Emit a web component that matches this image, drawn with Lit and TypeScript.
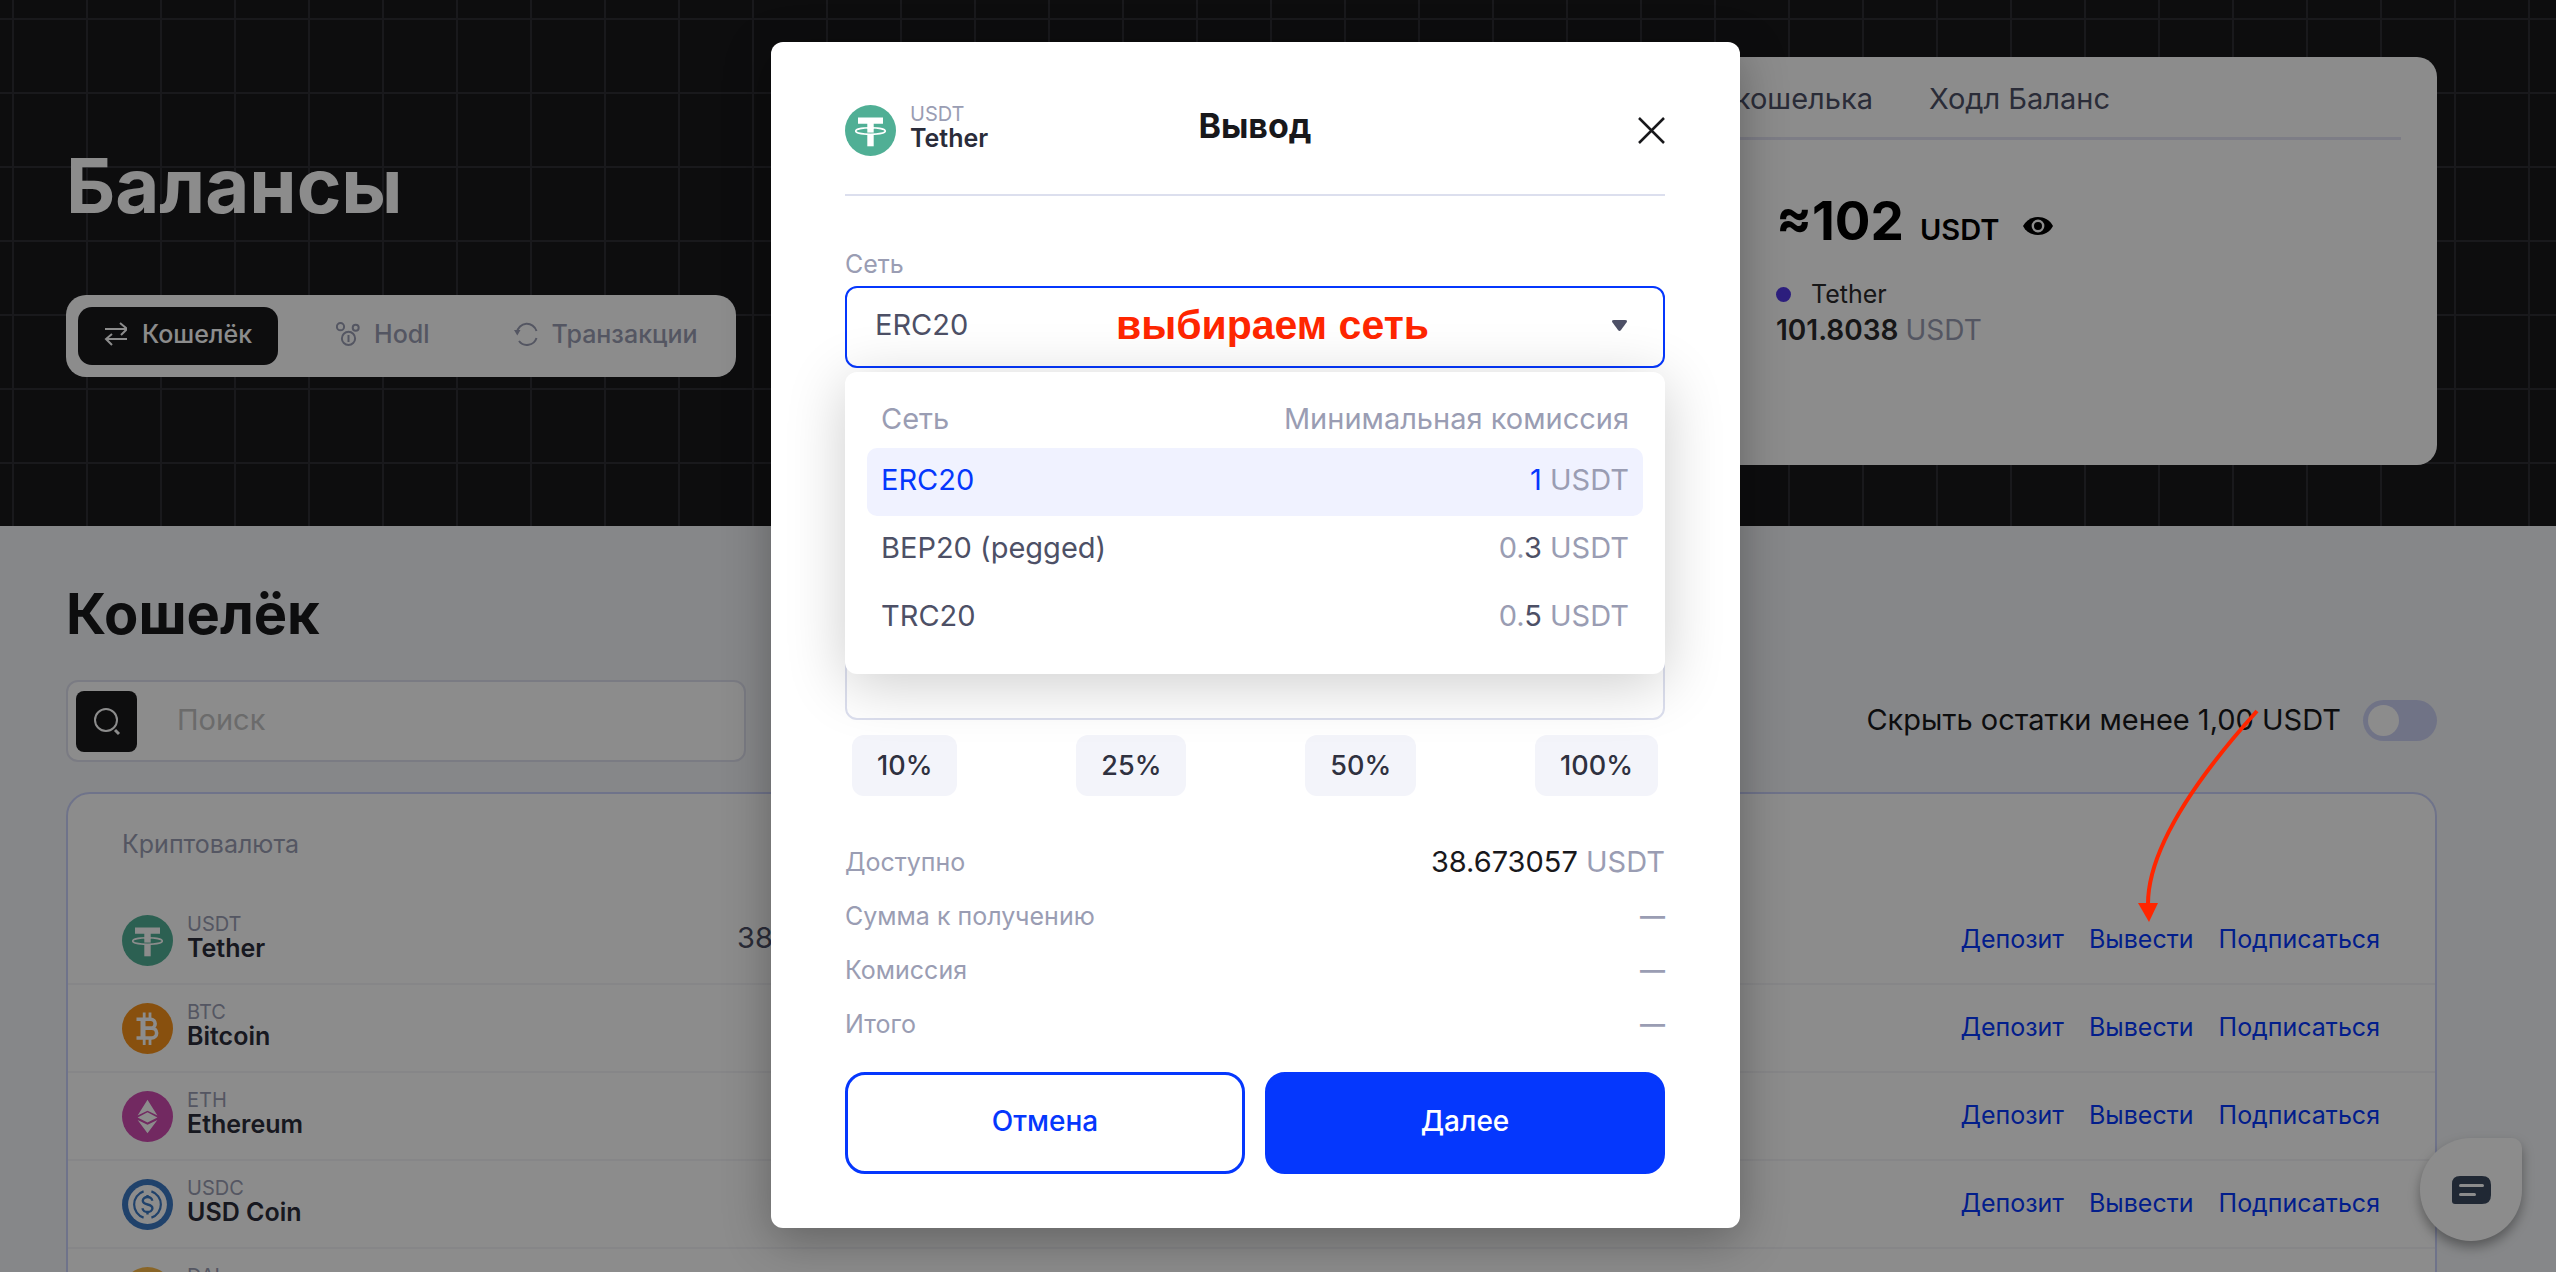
import { LitElement, html, css, svg } from "lit";
import { customElement, property, state } from "lit/decorators.js";
import { classMap } from "lit/directives/class-map.js";

type CoinId = "USDT" | "BTC" | "ETH" | "USDC" | "DAI";

interface Coin {
  id: CoinId;
  name: string;
  balance?: string;
}

interface Network {
  name: string;
  faint: string;
  strong: string;
}

const COINS: Coin[] = [
  { id: "USDT", name: "Tether", balance: "38.673057" },
  { id: "BTC", name: "Bitcoin" },
  { id: "ETH", name: "Ethereum" },
  { id: "USDC", name: "USD Coin" },
  { id: "DAI", name: "Dai" },
];

const NETWORKS: Network[] = [
  { name: "ERC20", faint: "", strong: "1" },
  { name: "BEP20 (pegged)", faint: "0.", strong: "3" },
  { name: "TRC20", faint: "0.", strong: "5" },
];

const SHARES = ["10%", "25%", "50%", "100%"];

const COIN_ART: Record<CoinId, unknown> = {
  USDT: svg`
    <circle cx="25.5" cy="25.5" r="25.5" fill="#50af95" />
    <path fill="#fff" d="M13 12.5h25v6.2h-9.3v5h-6.4v-5H13z" />
    <path fill="#fff" d="M22.3 29h6.4v12.3h-6.4z" />
    <ellipse cx="25.5" cy="26" rx="14.8" ry="3.3" fill="none" stroke="#fff" stroke-width="1.6" />
    <path fill="#fff" d="M22.3 23h6.4v4.600h-6.400z" />`,
  BTC: svg`
    <circle cx="25.5" cy="25.5" r="25.5" fill="#f7931a" />
    <g fill="none" stroke="#fff">
      <path stroke-width="2.8" d="M22.2 9.5v6M28 9.5v6M22.2 36v6M28 36v6" />
      <path stroke-width="3.6" d="M14.5 16.2h14.2a4.4 4.4 0 0 1 0 8.9h-7.5M14.5 35h15.2a4.9 4.9 0 0 0 0-9.9h-8.5" />
      <path stroke-width="5" d="M21 16v19" />
    </g>`,
  ETH: svg`
    <circle cx="25.5" cy="25.5" r="25.5" fill="#cf4bb1" />
    <path fill="#fff" d="M25.5 8.8 35.4 24.4l-9.9-4.6-9.9 4.6z" />
    <path fill="#fff" d="m25.5 21.2 9.9 5.2-9.9 5.2-9.9-5.2z" />
    <path fill="#fff" d="m15.6 28.9 9.9 4.9 9.9-4.9-9.9 13.4z" />`,
  USDC: svg`
    <circle cx="25.5" cy="25.5" r="25.5" fill="#3b78c4" />
    <circle cx="25.5" cy="25.5" r="19.4" fill="#fff" />
    <g fill="none" stroke="#3b78c4" stroke-width="2.2">
      <path d="M21.6 12.4a13.8 13.8 0 0 0 0 26.2M29.4 12.4a13.8 13.8 0 0 1 0 26.2" />
      <path stroke-width="2.4" d="M30.2 21.8c0-5-9.4-5-9.4 0s9.6 2.4 9.6 7.4-9.8 5-9.8 0M25.5 16v3M25.5 32.4v3" />
    </g>`,
  DAI: svg`
    <circle cx="25.5" cy="25.5" r="25.5" fill="#f9b948" />`,
};

@customElement("coin-label")
export class CoinLabel extends LitElement {
  @property() coin: CoinId = "USDT";
  @property() name = "";

  static styles = css`
    :host {
      display: inline-flex;
      align-items: center;
      gap: 14px;
      text-align: left;
    }
    .art {
      display: block;
      width: 51px;
      height: 51px;
      flex: none;
    }
    .text {
      display: flex;
      flex-direction: column;
      padding-bottom: 8px;
      line-height: 24px;
    }
    .ticker {
      font-size: 20px;
      color: #9a9db3;
    }
    .name {
      font-size: 25px;
      font-weight: 600;
      color: #2a2c3a;
    }
  `;

  render() {
    return html`
      <svg class="art" viewBox="0 0 51 51" aria-hidden="true">${COIN_ART[this.coin]}</svg>
      <span class="text">
        <span class="ticker">${this.coin}</span>
        <span class="name">${this.name}</span>
      </span>
    `;
  }
}

@customElement("balance-hero")
export class BalanceHero extends LitElement {
  static styles = css`
    :host {
      display: flex;
      justify-content: space-between;
      align-items: center;
      padding: 57px 119px 61px 66px;
      background-color: #18181b;
      background-image:
        linear-gradient(to right, #2f2f33 2px, transparent 2px),
        linear-gradient(to bottom, #2f2f33 2px, transparent 2px);
      background-size: 74px 74px;
      background-position: 12px 18px;
    }
    .title {
      margin: 0 0 70px;
      font-size: 76px;
      line-height: 80px;
      font-weight: 700;
      color: #fff;
    }
    .tabs {
      display: flex;
      width: fit-content;
      padding: 12px;
      background: #fff;
      border-radius: 20px;
    }
    .tab {
      display: inline-flex;
      align-items: center;
      gap: 14px;
      height: 58px;
      padding: 0 26px 4px;
      border: 0;
      border-radius: 14px;
      background: none;
      font: 500 25px/28px Inter, "Liberation Sans", sans-serif;
      color: #9a9db3;
    }
    .tab + .tab {
      margin-left: 32px;
    }
    .tab.active {
      background: #18181b;
      color: #fff;
    }
    .tab svg {
      width: 24px;
      height: 24px;
      fill: none;
      stroke: currentColor;
      stroke-width: 2;
    }
    .card {
      box-sizing: border-box;
      width: 848px;
      min-height: 408px;
      padding: 24px 36px;
      background: #fff;
      border-radius: 20px;
    }
    .nav {
      display: flex;
      justify-content: flex-start;
      gap: 56px;
      padding-bottom: 21px;
      border-bottom: 3px solid #e4e3f5;
    }
    .nav a {
      font-size: 29px;
      line-height: 35px;
      color: #4d5066;
      text-decoration: none;
    }
    .body {
      padding: 49px 0 0 151px;
    }
    .total {
      display: flex;
      align-items: baseline;
      gap: 16px;
      font-size: 53px;
      line-height: 64px;
      font-weight: 700;
      color: #000;
    }
    .unit {
      font-size: 29px;
      font-weight: 600;
    }
    .eye {
      display: inline-flex;
      align-self: center;
      margin-left: 8px;
      padding: 0;
      border: 0;
      background: none;
    }
    .eye svg {
      width: 30px;
      height: 24px;
    }
    .asset {
      display: flex;
      align-items: center;
      gap: 20px;
      margin-top: 14px;
      font-size: 25px;
      line-height: 36px;
      color: #2a2a2c;
    }
    .dot {
      width: 15px;
      height: 15px;
      border-radius: 50%;
      background: #5239e6;
    }
    .amount {
      font-size: 28px;
      line-height: 36px;
      font-weight: 600;
      color: #2a2a2c;
    }
    .amount span {
      font-weight: 400;
      color: #9a9db3;
    }
  `;

  render() {
    return html`
      <div>
        <h1 class="title">Балансы</h1>
        <nav class="tabs">
          <button class="tab active">
            <svg viewBox="0 0 24 24"><path d="M1 7h21M16 1l6 5v2l-5 5M23 17H2M8 12l-6 5 6 6" /></svg>
            Кошелёк
          </button>
          <button class="tab">
            <svg viewBox="0 0 24 24">
              <circle cx="4.5" cy="4.7" r="3.6" /><circle cx="19.7" cy="5.7" r="3" />
              <circle cx="12.5" cy="16.4" r="6.6" /><path d="M12.5 13v7" />
            </svg>
            Hodl
          </button>
          <button class="tab">
            <svg viewBox="0 0 24 24">
              <path d="M3 10.5A10 10 0 0 1 22.5 9M22.5 16A10 10 0 0 1 5 19" />
              <path fill="currentColor" stroke="none" d="M0 8h6.5L3.3 13.5z" />
            </svg>
            Транзакции
          </button>
        </nav>
      </div>
      <section class="card">
        <nav class="nav">
          <a href="#wallet">Баланс кошелька</a>
          <a href="#hodl">Ходл Баланс</a>
        </nav>
        <div class="body">
          <div class="total">
            ≈102
            <span class="unit">USDT</span>
            <button class="eye" aria-label="Скрыть баланс">
              <svg viewBox="0 0 30 24">
                <path d="M0 12C3 6 9 3 15 3s12 3 15 9c-3 6-9 9-15 9S3 18 0 12z" />
                <circle cx="15" cy="12" r="5.2" fill="none" stroke="#fff" stroke-width="2.4" />
              </svg>
            </button>
          </div>
          <div class="asset"><span class="dot"></span>Tether</div>
          <div class="amount">101.8038 <span>USDT</span></div>
        </div>
      </section>
    `;
  }
}

@customElement("wallet-section")
export class WalletSection extends LitElement {
  static styles = css`
    :host {
      display: block;
      padding: 56px 119px 0 66px;
      background: #f4f6f9;
    }
    .title {
      margin: 0 0 34px;
      font-size: 56px;
      line-height: 64px;
      font-weight: 700;
      color: #18181b;
    }
    .toolbar {
      display: flex;
      justify-content: space-between;
      align-items: center;
      margin-bottom: 30px;
    }
    .search {
      box-sizing: border-box;
      display: flex;
      align-items: center;
      width: 680px;
      height: 82px;
      padding: 0 8px;
      background: #fff;
      border: 2px solid #dfe0ee;
      border-radius: 12px;
    }
    .go {
      display: inline-flex;
      align-items: center;
      justify-content: center;
      width: 61px;
      height: 61px;
      padding: 0;
      border: 0;
      border-radius: 8px;
      background: #18181b;
    }
    .go svg {
      width: 30px;
      height: 30px;
      fill: none;
      stroke: #fff;
      stroke-width: 2;
    }
    .query {
      flex: 1;
      min-width: 0;
      padding: 0 40px 2px;
      border: 0;
      outline: 0;
      background: none;
      font: 400 29px/36px Inter, "Liberation Sans", sans-serif;
    }
    .query::placeholder {
      color: #c3c3c3;
      opacity: 1;
    }
    .filter {
      display: inline-flex;
      align-items: center;
      gap: 22px;
      padding-bottom: 2px;
      font-size: 29px;
      line-height: 36px;
      color: #18181b;
    }
    .switch {
      appearance: none;
      display: flex;
      align-items: center;
      width: 74px;
      height: 41px;
      margin: 0;
      padding: 0 5px;
      border-radius: 21px;
      background: #cdd1f5;
    }
    .switch::before {
      content: "";
      width: 31px;
      height: 31px;
      border-radius: 50%;
      background: #fff;
    }
    .switch:checked {
      justify-content: flex-end;
    }
    .panel {
      background: #fff;
      border: 2px solid #cbd2fb;
      border-radius: 24px;
    }
    .coins {
      width: 100%;
      border-collapse: separate;
      border-spacing: 0;
    }
    .head {
      height: 103px;
      padding: 0 0 4px 54px;
      box-sizing: border-box;
      text-align: left;
      font-size: 25px;
      font-weight: 400;
      color: #9a9db3;
    }
    .cell {
      box-sizing: border-box;
      height: 88px;
      padding: 0;
      border-bottom: 2px solid #f4f4f7;
    }
    .coin {
      width: 669px;
      padding-left: 54px;
      line-height: 0;
    }
    .balance {
      padding-bottom: 4px;
      font-size: 29px;
      color: #4d5066;
      line-height: 36px;
    }
    .actions {
      padding: 0 55px 2px 0;
      text-align: right;
    }
    .links {
      display: inline-flex;
      gap: 25px;
    }
    .links a {
      font-size: 25px;
      line-height: 28px;
      color: #0537fd;
      text-decoration: none;
    }
  `;

  render() {
    return html`
      <h2 class="title">Кошелёк</h2>
      <div class="toolbar">
        <form class="search" @submit=${(e: Event) => e.preventDefault()}>
          <button class="go" aria-label="Поиск">
            <svg viewBox="0 0 30 30"><circle cx="14" cy="14" r="11" /><path d="m23 24 4 4" stroke-width="3" /></svg>
          </button>
          <input class="query" type="text" placeholder="Поиск" aria-label="Поиск" />
        </form>
        <label class="filter">
          Скрыть остатки менее 1,00 USDT
          <input class="switch" type="checkbox" />
        </label>
      </div>
      <div class="panel">
        <table class="coins">
          <thead>
            <tr>
              <th class="head">Криптовалюта</th>
              <th class="head"></th>
              <th class="head"></th>
            </tr>
          </thead>
          <tbody>
            ${COINS.map(
              (c) => html`
                <tr>
                  <td class="cell coin"><coin-label coin=${c.id} name=${c.name}></coin-label></td>
                  <td class="cell balance">${c.balance ?? ""}</td>
                  <td class="cell actions">
                    <span class="links">
                      <a href="#deposit">Депозит</a>
                      <a href="#withdraw">Вывести</a>
                      <a href="#subscribe">Подписаться</a>
                    </span>
                  </td>
                </tr>
              `,
            )}
          </tbody>
        </table>
      </div>
    `;
  }
}

@customElement("withdraw-dialog")
export class WithdrawDialog extends LitElement {
  @state() private network = "ERC20";

  static styles = css`
    :host {
      box-sizing: border-box;
      display: block;
      width: 969px;
      max-width: 100%;
      padding: 0 75px 54px 74px;
      background: #fff;
      border-radius: 12px;
      box-shadow: 0 12px 48px rgba(0, 0, 0, 0.3);
    }
    .header {
      display: grid;
      grid-template-columns: 1fr auto 1fr;
      align-items: center;
      padding: 60px 0 36px;
      border-bottom: 2px solid #dcdfee;
    }
    .title {
      margin: 0;
      padding-bottom: 8px;
      font-size: 34px;
      line-height: 40px;
      font-weight: 700;
      color: #18181b;
    }
    .close {
      justify-self: end;
      display: inline-flex;
      padding: 0;
      border: 0;
      background: none;
    }
    .close svg {
      width: 27px;
      height: 27px;
      fill: none;
      stroke: #18181b;
      stroke-width: 2.5;
    }
    .label {
      display: block;
      margin: 54px 0 8px;
      font-size: 25px;
      line-height: 28px;
      color: #9a9db3;
    }
    .picker {
      position: relative;
    }
    .select,
    .field {
      box-sizing: border-box;
      display: block;
      width: 100%;
      height: 82px;
      padding: 0 28px 4px;
      border: 2px solid #dcdfee;
      border-radius: 12px;
      outline: 0;
      background: #fff;
      font: 400 29px/36px Inter, "Liberation Sans", sans-serif;
      color: #4d5066;
    }
    .select {
      appearance: none;
      border-color: #0537fd;
    }
    .caret {
      position: absolute;
      right: 38px;
      top: 34px;
      width: 15px;
      height: 11px;
      fill: #4d5066;
    }
    .note {
      position: absolute;
      left: 271px;
      top: 15px;
      font: 700 41px/48px "Liberation Sans", Arial, sans-serif;
      color: #ff2600;
      white-space: nowrap;
      pointer-events: none;
    }
    .menu {
      position: absolute;
      z-index: 1;
      left: 0;
      right: 0;
      top: 86px;
      padding: 13px 22px 22px;
      background: #fff;
      border-radius: 12px;
      box-shadow: 0 10px 60px rgba(0, 0, 0, 0.2);
      font-size: 29px;
      line-height: 36px;
    }
    .menu-head {
      display: flex;
      justify-content: space-between;
      padding: 16px 14px 11px;
      color: #9a9db3;
    }
    .options {
      margin: 0;
      padding: 0;
      list-style: none;
    }
    .option {
      display: flex;
      justify-content: space-between;
      padding: 14px 14px 18px;
      border-radius: 10px;
      color: #4d5066;
    }
    .option.chosen {
      background: #f0f2ff;
      color: #0537fd;
    }
    .faint {
      color: #9a9db3;
    }
    .address {
      margin-top: 58px;
    }
    .sum {
      margin-top: 130px;
    }
    .shares {
      display: flex;
      justify-content: space-between;
      padding: 15px 7px 39px;
    }
    .share {
      height: 61px;
      padding: 0 25px;
      border: 0;
      border-radius: 12px;
      background: #f3f4fa;
      font: 500 27px/36px Inter, "Liberation Sans", sans-serif;
      color: #2f3140;
    }
    .summary {
      margin: 0 0 21px;
      font-size: 25px;
      line-height: 54px;
      color: #9a9db3;
    }
    .line {
      display: flex;
      justify-content: space-between;
    }
    .value {
      margin: 0;
      font-weight: 600;
    }
    .available {
      font-size: 29px;
      font-weight: 400;
    }
    .available b {
      font-weight: 400;
      color: #18181b;
    }
    .buttons {
      display: grid;
      grid-template-columns: 1fr 1fr;
      gap: 20px;
    }
    .btn {
      height: 102px;
      padding: 0 0 4px;
      border: 3px solid #0537fd;
      border-radius: 20px;
      background: #fff;
      font: 500 28px/36px Inter, "Liberation Sans", sans-serif;
      color: #0537fd;
    }
    .btn.primary {
      background: #0537fd;
      color: #fff;
    }
  `;

  render() {
    return html`
      <header class="header">
        <coin-label coin="USDT" name="Tether"></coin-label>
        <h2 class="title">Вывод</h2>
        <button class="close" aria-label="Закрыть">
          <svg viewBox="0 0 27 27"><path d="m1 1 25 25M26 1 1 26" /></svg>
        </button>
      </header>

      <label class="label" for="network">Сеть</label>
      <div class="picker">
        <select class="select" id="network" .value=${this.network}>
          ${NETWORKS.map((n) => html`<option>${n.name}</option>`)}
        </select>
        <svg class="caret" viewBox="0 0 15 11"><path d="M2 0h11q3 0 1.5 2.5L9 10q-1.5 2-3 0L.5 2.5Q-1 0 2 0z" /></svg>
        <span class="note">выбираем сеть</span>
        <div class="menu">
          <div class="menu-head"><span>Сеть</span><span>Минимальная комиссия</span></div>
          <ul class="options" role="listbox" aria-label="Сеть">
            ${NETWORKS.map(
              (n) => html`
                <li
                  class=${classMap({ option: true, chosen: n.name === this.network })}
                  role="option"
                  aria-selected=${n.name === this.network}
                  @click=${() => (this.network = n.name)}
                >
                  <span>${n.name}</span>
                  <span><span class="faint">${n.faint}</span>${n.strong}<span class="faint"> USDT</span></span>
                </li>
              `,
            )}
          </ul>
        </div>
      </div>

      <input class="field address" type="text" aria-label="Адрес" />
      <input class="field sum" type="text" aria-label="Сумма" />

      <div class="shares">${SHARES.map((s) => html`<button class="share">${s}</button>`)}</div>

      <dl class="summary">
        <div class="line">
          <dt>Доступно</dt>
          <dd class="value available"><b>38.673057</b> USDT</dd>
        </div>
        ${["Сумма к получению", "Комиссия", "Итого"].map(
          (t) => html`<div class="line"><dt>${t}</dt><dd class="value">—</dd></div>`,
        )}
      </dl>

      <div class="buttons">
        <button class="btn">Отмена</button>
        <button class="btn primary">Далее</button>
      </div>
    `;
  }
}

@customElement("app-root")
export class AppRoot extends LitElement {
  static styles = css`
    :host {
      display: block;
      position: relative;
      height: 100vh;
      overflow: hidden;
      background: #f4f6f9;
      font-family: Inter, "Liberation Sans", sans-serif;
    }
    .chat {
      position: absolute;
      right: 34px;
      bottom: 31px;
      display: flex;
      align-items: center;
      justify-content: center;
      width: 102px;
      height: 103px;
      padding: 0;
      border: 0;
      border-radius: 51px 10px 51px 51px;
      background: #fff;
      box-shadow: 0 6px 12px rgba(0, 0, 0, 0.35);
    }
    .chat svg {
      width: 39px;
      height: 28px;
    }
    .overlay {
      position: absolute;
      inset: 0;
      display: flex;
      justify-content: center;
      align-items: flex-start;
      padding: 42px 45px 0 0;
      background: rgba(0, 0, 0, 0.45);
    }
    .arrow {
      position: absolute;
      right: 295px;
      top: 708px;
      width: 126px;
      height: 216px;
      pointer-events: none;
    }
  `;

  render() {
    return html`
      <balance-hero></balance-hero>
      <wallet-section></wallet-section>
      <button class="chat" aria-label="Чат">
        <svg viewBox="0 0 39 28">
          <path fill="#3b4a60" d="M8 0h22q9 0 9 9v10q0 9-9 9H3q-3 0-3-3V8q0-8 8-8z" />
          <path stroke="#fff" stroke-width="3" stroke-linecap="round" d="M8.5 9.5h22M8.5 18.5h14" />
        </svg>
      </button>
      <div class="overlay">
        <withdraw-dialog></withdraw-dialog>
      </div>
      <svg class="arrow" viewBox="2135 708 126 216" aria-hidden="true">
        <path fill="none" stroke="#ff2600" stroke-width="4" d="M2257 711Q2148 832 2148 904" />
        <path fill="#ff2600" d="M2138 903h20l-9 19z" />
      </svg>
    `;
  }
}
